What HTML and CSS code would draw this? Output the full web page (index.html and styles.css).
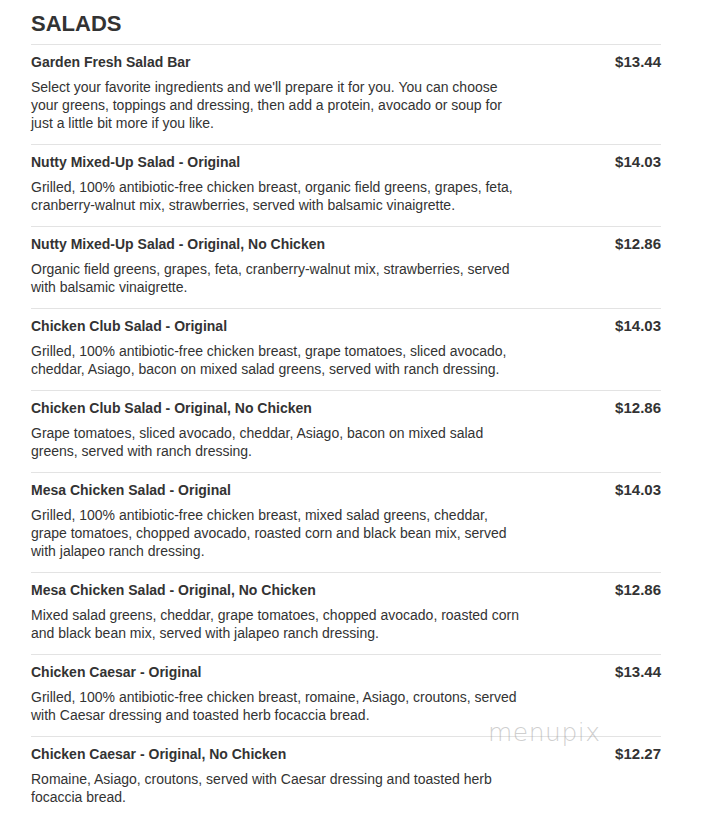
FILE: index.html
```html
<!DOCTYPE html>
<html>
<head>
<meta charset="utf-8">
<link rel="stylesheet" href="styles.css">
</head>
<body>
<div class="menu">
  <h2 class="section-title">SALADS</h2>
  <div class="item">
    <div class="item-main">
      <div class="item-name">Garden Fresh Salad Bar</div>
      <div class="item-desc">Select your favorite ingredients and we'll prepare it for you. You can choose your greens, toppings and dressing, then add a protein, avocado or soup for just a little bit more if you like.</div>
    </div>
    <div class="item-price">$13.44</div>
  </div>
  <div class="item">
    <div class="item-main">
      <div class="item-name">Nutty Mixed-Up Salad - Original</div>
      <div class="item-desc">Grilled, 100% antibiotic-free chicken breast, organic field greens, grapes, feta, cranberry-walnut mix, strawberries, served with balsamic vinaigrette.</div>
    </div>
    <div class="item-price">$14.03</div>
  </div>
  <div class="item">
    <div class="item-main">
      <div class="item-name">Nutty Mixed-Up Salad - Original, No Chicken</div>
      <div class="item-desc">Organic field greens, grapes, feta, cranberry-walnut mix, strawberries, served with balsamic vinaigrette.</div>
    </div>
    <div class="item-price">$12.86</div>
  </div>
  <div class="item">
    <div class="item-main">
      <div class="item-name">Chicken Club Salad - Original</div>
      <div class="item-desc">Grilled, 100% antibiotic-free chicken breast, grape tomatoes, sliced avocado, cheddar, Asiago, bacon on mixed salad greens, served with ranch dressing.</div>
    </div>
    <div class="item-price">$14.03</div>
  </div>
  <div class="item">
    <div class="item-main">
      <div class="item-name">Chicken Club Salad - Original, No Chicken</div>
      <div class="item-desc">Grape tomatoes, sliced avocado, cheddar, Asiago, bacon on mixed salad greens, served with ranch dressing.</div>
    </div>
    <div class="item-price">$12.86</div>
  </div>
  <div class="item">
    <div class="item-main">
      <div class="item-name">Mesa Chicken Salad - Original</div>
      <div class="item-desc">Grilled, 100% antibiotic-free chicken breast, mixed salad greens, cheddar, grape tomatoes, chopped avocado, roasted corn and black bean mix, served with jalapeo ranch dressing.</div>
    </div>
    <div class="item-price">$14.03</div>
  </div>
  <div class="item">
    <div class="item-main">
      <div class="item-name">Mesa Chicken Salad - Original, No Chicken</div>
      <div class="item-desc">Mixed salad greens, cheddar, grape tomatoes, chopped avocado, roasted corn and black bean mix, served with jalapeo ranch dressing.</div>
    </div>
    <div class="item-price">$12.86</div>
  </div>
  <div class="item">
    <div class="item-main">
      <div class="item-name">Chicken Caesar - Original</div>
      <div class="item-desc">Grilled, 100% antibiotic-free chicken breast, romaine, Asiago, croutons, served with Caesar dressing and toasted herb focaccia bread.</div>
    </div>
    <div class="item-price">$13.44</div>
  </div>
  <div class="item item-last">
    <div class="item-main">
      <div class="item-name">Chicken Caesar - Original, No Chicken</div>
      <div class="item-desc">Romaine, Asiago, croutons, served with Caesar dressing and toasted herb focaccia bread.</div>
    </div>
    <div class="item-price">$12.27</div>
  </div>
  <div class="watermark">menupix</div>
</div>
</body>
</html>
```

FILE: styles.css
```css
html, body {
  margin: 0;
  padding: 0;
  background: #ffffff;
}
body {
  font-family: "Liberation Sans", Arial, sans-serif;
  color: #333333;
}
.menu {
  position: relative;
  width: 630px;
  margin-left: 31px;
}
.section-title {
  margin: 0;
  padding-top: 11px;
  height: 45px;
  box-sizing: border-box;
  font-size: 22px;
  line-height: 26px;
  font-weight: bold;
  color: #333333;
  border-bottom: 1px solid #e3e3e3;
}
.item {
  display: flex;
  justify-content: space-between;
  padding: 7px 0 12px 0;
  border-bottom: 1px solid #e3e3e3;
}
.item-last {
  border-bottom: none;
}
.item-main {
  width: 490px;
}
.item-name {
  font-size: 14px;
  font-weight: bold;
  line-height: 20px;
  margin-bottom: 6px;
  color: #333333;
}
.item-desc {
  font-size: 14px;
  line-height: 18px;
  color: #333333;
}
.item-price {
  font-size: 15px;
  font-weight: bold;
  line-height: 20px;
  color: #333333;
}
.watermark {
  position: absolute;
  left: 457px;
  top: 718px;
  font-family: "DejaVu Sans", sans-serif;
  font-size: 25px;
  font-weight: 200;
  color: rgba(160, 160, 160, 0.5);
  letter-spacing: 0.5px;
}
```
